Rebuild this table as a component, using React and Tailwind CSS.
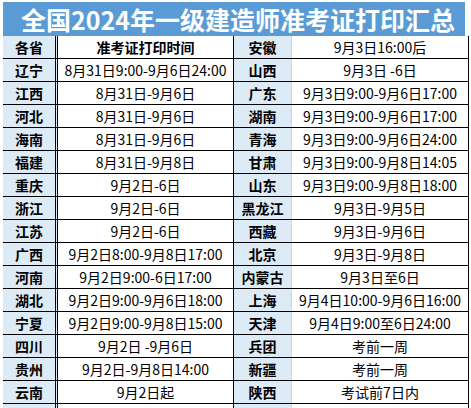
import React from "react";

const left = [
  ["各省", "准考证打印时间", true],
  ["辽宁", "8月31日9:00-9月6日24:00"],
  ["江西", "8月31日-9月6日"],
  ["河北", "8月31日-9月6日"],
  ["海南", "8月31日-9月6日"],
  ["福建", "8月31日-9月8日"],
  ["重庆", "9月2日-6日"],
  ["浙江", "9月2日-6日"],
  ["江苏", "9月2日-6日"],
  ["广西", "9月2日8:00-9月8日17:00"],
  ["河南", "9月2日9:00-6日17:00"],
  ["湖北", "9月2日9:00-9月6日18:00"],
  ["宁夏", "9月2日9:00-9月8日15:00"],
  ["四川", "9月2日 -9月6日"],
  ["贵州", "9月2日-9月8日14:00"],
  ["云南", "9月2日起"],
];

const right = [
  ["安徽", "9月3日16:00后"],
  ["山西", "9月3日 -6日"],
  ["广东", "9月3日9:00-9月6日17:00"],
  ["湖南", "9月3日9:00-9月6日17:00"],
  ["青海", "9月3日9:00-9月6日24:00"],
  ["甘肃", "9月3日9:00-9月8日14:05"],
  ["山东", "9月3日9:00-9月8日18:00"],
  ["黑龙江", "9月3日-9月5日"],
  ["西藏", "9月3日-9月6日"],
  ["北京", "9月3日-9月8日"],
  ["内蒙古", "9月3日至6日"],
  ["上海", "9月4日10:00-9月6日16:00"],
  ["天津", "9月4日9:00至6日24:00"],
  ["兵团", "考前一周"],
  ["新疆", "考前一周"],
  ["陕西", "考试前7日内"],
];

export default function App() {
  return (
    <div
      className="w-[471px] h-[408px] overflow-hidden bg-white text-black pt-[2px] pl-[3px]"
      style={{ fontFamily: '"Noto Sans CJK SC", "Noto Sans", sans-serif' }}
    >
      <div className="w-[462px] h-[34px] bg-[#5b9bd5] flex items-center justify-center text-white font-bold text-[25px] leading-none pl-[8px]">
        全国2024年一级建造师准考证打印汇总
      </div>
      <div className="flex flex-col w-[466px]">
        {left.map((l, i) => {
          const r = right[i];
          return (
            <div key={i} className="flex h-[23px] border-b border-black text-[14px] leading-none">
              <div className="w-[55px] shrink-0 bg-[#ddebf7] border-r-[3px] border-double border-black flex items-center justify-center font-bold">
                {l[0]}
              </div>
              <div className={"w-[176px] shrink-0 bg-white border-r border-black flex items-center justify-center whitespace-pre " + (l[2] ? "font-bold" : "")}>
                {l[1]}
              </div>
              <div className="w-[58px] shrink-0 bg-[#ddebf7] border-r border-[#c6d3de] flex items-center justify-center font-bold">
                {r[0]}
              </div>
              <div className="w-[177px] shrink-0 bg-white border-r border-black flex items-center justify-center whitespace-pre">
                {r[1]}
              </div>
            </div>
          );
        })}
        <div className="flex h-[10px]">
          <div className="w-[55px] shrink-0 bg-[#ddebf7] border-r-[3px] border-double border-black" />
          <div className="w-[176px] shrink-0 bg-white border-r border-black" />
          <div className="w-[58px] shrink-0 bg-[#ddebf7] border-r border-[#c6d3de]" />
          <div className="w-[177px] shrink-0 bg-white border-r border-black" />
        </div>
      </div>
    </div>
  );
}
